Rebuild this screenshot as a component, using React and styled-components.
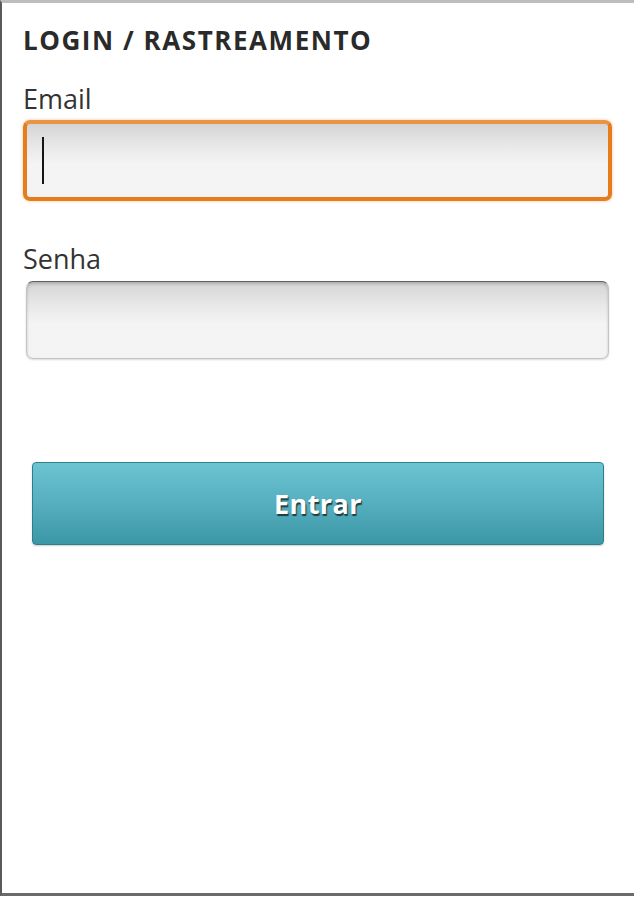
import React from 'react';
import styled, { createGlobalStyle } from 'styled-components';

const GlobalStyle = createGlobalStyle`
  html, body {
    margin: 0;
    padding: 0;
    background: #ffffff;
  }
  body {
    font-family: "Open Sans", "Noto Sans", sans-serif;
  }
`;

const Frame = styled.div`
  box-sizing: border-box;
  width: 634px;
  height: 896px;
  border-top: 3px solid #bdbdbd;
  border-left: 2px solid #5a5a5a;
  border-bottom: 3px solid #6a6a6a;
  background: #fff;
  padding: 21px 22px 0 21px;
  display: flex;
  flex-direction: column;
`;

const Title = styled.h1`
  margin: 0;
  font-size: 26px;
  font-weight: 700;
  color: #2a2a2a;
  letter-spacing: 1.55px;
  line-height: 32px;
`;

const Label = styled.label`
  display: block;
  font-size: 27px;
  color: #333;
  line-height: 34px;
  margin-top: ${p => p.$top || 0}px;
`;

const Field = styled.div`
  position: relative;
  box-sizing: border-box;
  height: ${p => (p.$focused ? 81 : 78)}px;
  margin: ${p => (p.$focused ? '4px 0 0 0' : '5px 3px 0 3px')};
  border-radius: 7px;
  border: ${p => (p.$focused ? '4px solid #e67c1c' : '1px solid #c4c4c4')};
  border-top-color: ${p => (p.$focused ? '#e99445' : '#5e5e5e')};
  background: linear-gradient(to bottom, #d4d4d4 0%, #e8e8e8 30%, #f4f4f4 55%, #f3f3f3 100%);
  box-shadow: ${p =>
    p.$focused
      ? '0 0 3px rgba(230,126,34,0.5)'
      : 'inset 0 2px 3px rgba(0,0,0,0.18), 0 1px 2px rgba(0,0,0,0.15)'};
`;

const Caret = styled.span`
  position: absolute;
  left: 15px;
  top: 13px;
  width: 2px;
  height: 47px;
  background: #151515;
`;

const Button = styled.button`
  box-sizing: border-box;
  margin: 103px 8px 0 9px;
  height: 83px;
  border-radius: 4px;
  border: 1px solid #2f7f8b;
  background: linear-gradient(to bottom, #6cc4d2 0%, #55afbf 50%, #3b96a5 100%);
  color: #fff;
  font-family: "Open Sans", "Noto Sans", sans-serif;
  font-weight: 700;
  font-size: 27px;
  letter-spacing: 0.4px;
  text-shadow: 1px 2px 1px #1e3a40;
  box-shadow: 0 1px 2px rgba(0,0,0,0.2);
  cursor: pointer;
`;

export default function App() {
  return (
    <>
      <GlobalStyle />
      <Frame>
        <Title>LOGIN / RASTREAMENTO</Title>
        <Label $top={26}>Email</Label>
        <Field $focused>
          <Caret />
        </Field>
        <Label $top={41}>Senha</Label>
        <Field />
        <Button>Entrar</Button>
      </Frame>
    </>
  );
}
